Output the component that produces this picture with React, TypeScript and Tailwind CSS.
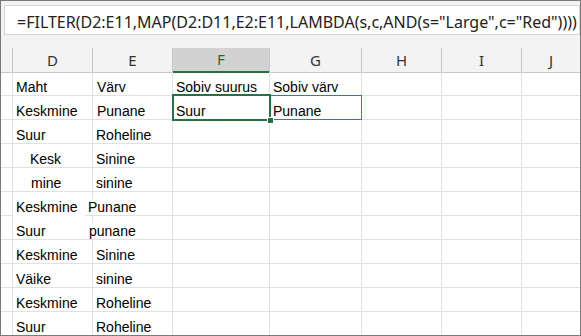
type Cell = { text: string; cls?: string; bg?: boolean };

type Row = {
  d: Cell;
  e: Cell;
  f?: Cell;
  g?: Cell;
  dNoBottom?: boolean;
};

const rows: Row[] = [
  {
    d: { text: "Maht" },
    e: { text: "Värv", cls: "pl-[4px]" },
    f: { text: "Sobiv suurus" },
    g: { text: "Sobiv värv" },
  },
  {
    d: { text: "Keskmine" },
    e: { text: "Punane", cls: "pl-[4px]" },
    f: { text: "Suur" },
    g: { text: "Punane" },
  },
  { d: { text: "Suur", cls: "pt-[4px]" }, e: { text: "Roheline", cls: "pl-[2px]" } },
  { d: { text: "Kesk", cls: "pl-[17px]" }, e: { text: "Sinine", cls: "pl-0" } },
  { d: { text: "mine", cls: "pl-[18px]" }, e: { text: "sinine", cls: "pl-[1px]" } },
  {
    d: { text: "Keskmine" },
    e: { text: "Punane", cls: "pl-0 -ml-[8px]", bg: true },
    dNoBottom: true,
  },
  {
    d: { text: "Suur", cls: "pt-[5px]" },
    e: { text: "punane", cls: "pl-0 -ml-[7px]", bg: true },
  },
  { d: { text: "Keskmine" }, e: { text: "Sinine", cls: "pl-0" } },
  { d: { text: "Väike" }, e: { text: "sinine", cls: "pl-[1px]" } },
  { d: { text: "Keskmine" }, e: { text: "Roheline", cls: "pl-[2px]" } },
  { d: { text: "Suur", cls: "pt-[5px]" }, e: { text: "Roheline", cls: "pl-[2px]" } },
];

const cols = "grid grid-cols-[12px_80px_80px_97px_92px_80px_80px_1fr]";
const headers = ["D", "E", "F", "G", "H", "I", "J"];

function TextCell({ cell, noBottom }: { cell?: Cell; noBottom?: boolean }) {
  return (
    <div
      className={`flex h-6 items-start overflow-visible border-r border-[#e1e1e1] pl-[3px] pt-[7px] ${
        noBottom ? "" : "border-b"
      } ${cell?.cls ?? ""}`}
    >
      {cell && (
        <span className={`whitespace-nowrap leading-4 ${cell.bg ? "relative z-10 bg-white" : ""}`}>
          {cell.text}
        </span>
      )}
    </div>
  );
}

export default function App() {
  return (
    <div className="h-[336px] w-[581px] overflow-hidden border border-[#7a7a7a] bg-[#f3f3f3] font-['Liberation_Sans',Arial,sans-serif] text-[14px] text-black">
      <div className="ml-[3px] mt-[4px] flex h-[30px] items-center border border-[#d6d6d6] bg-white pl-[12px] pt-[4px] font-['Noto_Sans',sans-serif] text-[16px] text-[#222] whitespace-nowrap">
        =FILTER(D2:E11,MAP(D2:D11,E2:E11,LAMBDA(s,c,AND(s="Large",c="Red"))))
      </div>

      <div className={`mt-[13px] ${cols} h-6 font-['Noto_Sans',sans-serif] text-[15px] text-[#333]`}>
        <div className="border-r border-b border-[#c8c8c8]" />
        {headers.map((h) =>
          h === "F" ? (
            <div
              key={h}
              className="flex items-center justify-center border-r border-b-2 border-r-[#c8c8c8] border-b-[#217346] bg-[#d2d2d2] text-[#1e6b41]"
            >
              {h}
            </div>
          ) : (
            <div
              key={h}
              className="flex items-center justify-center border-r border-b border-[#c8c8c8] last:border-r-0"
            >
              {h}
            </div>
          ),
        )}
      </div>

      <div className="bg-white">
        {rows.map((r, i) => (
          <div key={i} className={cols}>
            <div className="h-6 border-r border-b border-[#e1e1e1]" />
            <TextCell cell={r.d} noBottom={r.dNoBottom} />
            <TextCell cell={r.e} />
            <div className="relative">
              <TextCell cell={r.f} />
              {i === 1 && (
                <div className="absolute -top-[2px] -left-[1px] -right-[1px] -bottom-[1px] z-20 border-2 border-[#217346]">
                  <div className="absolute -right-[4px] -bottom-[4px] size-[5px] bg-[#217346] outline outline-1 outline-white" />
                </div>
              )}
            </div>
            <div className="relative">
              <TextCell cell={r.g} />
              {i === 1 && (
                <div className="absolute -top-[1px] -left-[1px] right-0 bottom-0 z-10 border border-[#3a70d6]" />
              )}
            </div>
            <TextCell />
            <TextCell />
            <div className="h-6 border-b border-[#e1e1e1]" />
          </div>
        ))}
      </div>
    </div>
  );
}
